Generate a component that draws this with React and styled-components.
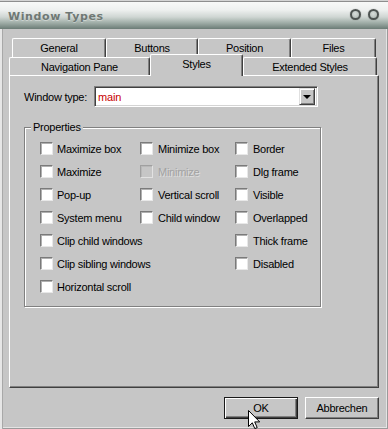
import React from "react";
import styled, { createGlobalStyle, css } from "styled-components";

const GlobalStyle = createGlobalStyle`
  html, body { margin: 0; padding: 0; background: #c6c6c6; }
  body { font-family: "Liberation Sans", Arial, sans-serif; }
`;

const Window = styled.div`
  position: relative;
  width: 388px;
  height: 429px;
  display: flex;
  flex-direction: column;
  overflow: hidden;
  background: #c6c6c6;
`;

const TitleBar = styled.div`
  box-sizing: border-box;
  height: 29px;
  flex: none;
  display: flex;
  align-items: center;
  justify-content: space-between;
  padding: 3px 9px 0 8px;
  background: linear-gradient(
    to bottom,
    #d4d4d4 0px,
    #d4d4d4 1px,
    #8e8e8e 1px,
    #8e8e8e 2px,
    #f8f9f8 2px,
    #eef0ef 10px,
    #cfd6d3 17px,
    #9eaca6 23px,
    #6b7c76 29px
  );
`;

const Title = styled.span`
  font-family: "DejaVu Sans", Verdana, sans-serif;
  font-weight: bold;
  font-size: 11px;
  letter-spacing: 0.6px;
  color: #6e7874;
  text-shadow: 0 1px 0 rgba(255, 255, 255, 0.35);
`;

const TitleButtons = styled.div`
  display: flex;
  gap: 7px;
  margin-top: -3px;
`;

const RoundButton = styled.span`
  box-sizing: border-box;
  width: 11px;
  height: 11px;
  border-radius: 50%;
  border: 2.5px solid #4c5250;
  background: radial-gradient(circle at 45% 40%, #d8dedb 0%, #aab3af 100%);
  box-shadow: 0 0 1px rgba(40, 40, 40, 0.6);
`;

const Body = styled.div`
  flex: 1;
  display: flex;
  flex-direction: column;
  padding: 9px 9px 0 9px;
  box-shadow: inset 2px 0 0 #e6e6e6, inset 3px 0 0 #a8a8a8,
    inset -1px -1px 0 #9a9a9a, inset -2px -2px 0 #e4e4e4;
`;

const TabStrip = styled.div`
  display: flex;
  flex-direction: column;
  height: 37px;
  flex: none;
`;

const TabRow = styled.div`
  display: flex;
  height: ${(p) => p.$h}px;
  margin-left: ${(p) => p.$indent}px;
`;

const Tab = styled.div`
  box-sizing: border-box;
  width: ${(p) => p.$w}px;
  display: flex;
  align-items: center;
  justify-content: center;
  font-size: 11px;
  letter-spacing: -0.25px;
  color: #000;
  background: #c6c6c6;
  border-top: 1px solid #fff;
  border-left: 1px solid #fff;
  border-right: 1px solid #404040;
  box-shadow: inset -1px 0 0 #808080;
  border-radius: 2px 2px 0 0;
  position: relative;
  ${(p) =>
    p.$selected &&
    css`
      margin-top: -3px;
      margin-bottom: -1px;
      padding-bottom: 4px;
      z-index: 2;
    `}
`;

const Panel = styled.div`
  position: relative;
  z-index: 1;
  box-sizing: border-box;
  height: 313px;
  flex: none;
  border: 1px solid;
  border-color: #fff #404040 #404040 #fff;
  box-shadow: inset -1px -1px 0 #808080;
  padding: 10px 14px 0 14px;
`;

const FieldRow = styled.div`
  display: flex;
  align-items: center;
  gap: 7px;
`;

const Label = styled.span`
  font-size: 11px;
  letter-spacing: -0.25px;
  color: ${(p) => (p.$disabled ? "#a2a2a2" : "#000")};
  ${(p) => p.$disabled && css`text-shadow: 1px 1px 0 #dedede;`}
  white-space: nowrap;
`;

const Combo = styled.div`
  box-sizing: border-box;
  width: 224px;
  height: 21px;
  display: flex;
  align-items: center;
  justify-content: space-between;
  background: #fff;
  border: 1px solid;
  border-color: #808080 #fff #fff #808080;
  box-shadow: inset 1px 1px 0 #404040, inset -1px -1px 0 #d4d4d4;
  padding: 2px 2px 2px 3px;
`;

const ComboText = styled.span`
  font-size: 11px;
  letter-spacing: -0.2px;
  color: #c80000;
`;

const ComboButton = styled.span`
  box-sizing: border-box;
  width: 16px;
  height: 17px;
  display: flex;
  align-items: center;
  justify-content: center;
  background: #c6c6c6;
  border: 1px solid;
  border-color: #e0e0e0 #404040 #404040 #e0e0e0;
  box-shadow: inset 1px 1px 0 #fff, inset -1px -1px 0 #808080;
`;

const Arrow = styled.span`
  width: 0;
  height: 0;
  border-left: 4px solid transparent;
  border-right: 4px solid transparent;
  border-top: 4px solid #000;
  margin-top: 1px;
`;

const Group = styled.fieldset`
  box-sizing: border-box;
  width: 297px;
  margin: 14px 0 0 0;
  padding: 3px 0 8px 15px;
  min-width: 0;
  border: 1px solid #808080;
  box-shadow: 1px 1px 0 #fff, inset 1px 1px 0 #fff;
`;

const Legend = styled.legend`
  font-size: 11px;
  letter-spacing: -0.25px;
  line-height: 13px;
  padding: 0 2px;
  margin-left: -9px;
  background: #c6c6c6;
  color: #000;
`;

const Columns = styled.div`
  display: flex;
`;

const Column = styled.div`
  display: flex;
  flex-direction: column;
  width: ${(p) => p.$w}px;
`;

const CheckRow = styled.div`
  height: 23px;
  display: flex;
  align-items: center;
  gap: ${(p) => p.$gap}px;
`;

const Box = styled.span`
  box-sizing: border-box;
  width: 13px;
  height: 13px;
  flex: none;
  background: ${(p) => (p.$disabled ? "#c6c6c6" : "#fff")};
  border: 1px solid;
  border-color: ${(p) =>
    p.$disabled ? "#a0a0a0 #e2e2e2 #e2e2e2 #a0a0a0" : "#7a7a7a #e8e8e8 #e8e8e8 #7a7a7a"};
  box-shadow: inset 1px 1px 0 ${(p) => (p.$disabled ? "#b8b8b8" : "#b0b0b0")};
`;

const ButtonRow = styled.div`
  display: flex;
  justify-content: flex-end;
  gap: 7px;
  margin-top: 9px;
`;

const Button = styled.div`
  box-sizing: border-box;
  width: 74px;
  height: 22px;
  display: flex;
  align-items: center;
  justify-content: center;
  font-size: 11px;
  letter-spacing: -0.25px;
  color: #000;
  background: #c6c6c6;
  ${(p) =>
    p.$default
      ? css`
          border: 1px solid #1a1a1a;
          box-shadow: inset 1px 1px 0 #fff, inset -1px -1px 0 #404040,
            inset -2px -2px 0 #808080;
        `
      : css`
          border: 1px solid;
          border-color: #fff #404040 #404040 #fff;
          box-shadow: inset -1px -1px 0 #808080;
        `}
`;

const Cursor = styled.svg`
  position: absolute;
  left: 248px;
  top: 410px;
  z-index: 5;
`;

const col1 = ["Maximize box", "Maximize", "Pop-up", "System menu", "Clip child windows", "Clip sibling windows", "Horizontal scroll"];
const col2 = [
  { t: "Minimize box" },
  { t: "Minimize", d: true },
  { t: "Vertical scroll" },
  { t: "Child window" },
];
const col3 = ["Border", "Dlg frame", "Visible", "Overlapped", "Thick frame", "Disabled"];

function Check({ label, disabled, gap = 5 }) {
  return (
    <CheckRow $gap={gap}>
      <Box $disabled={disabled} />
      <Label $disabled={disabled}>{label}</Label>
    </CheckRow>
  );
}

export default function App() {
  return (
    <>
      <GlobalStyle />
      <Window>
        <TitleBar>
          <Title>Window Types</Title>
          <TitleButtons>
            <RoundButton />
            <RoundButton />
          </TitleButtons>
        </TitleBar>
        <Body>
          <TabStrip>
            <TabRow $h={19} $indent={3}>
              <Tab $w={94}>General</Tab>
              <Tab $w={92}>Buttons</Tab>
              <Tab $w={93}>Position</Tab>
              <Tab $w={85}>Files</Tab>
            </TabRow>
            <TabRow $h={18} $indent={0}>
              <Tab $w={141}>Navigation Pane</Tab>
              <Tab $w={93} $selected>
                Styles
              </Tab>
              <Tab $w={134}>Extended Styles</Tab>
            </TabRow>
          </TabStrip>
          <Panel>
            <FieldRow>
              <Label>Window type:</Label>
              <Combo>
                <ComboText>main</ComboText>
                <ComboButton>
                  <Arrow />
                </ComboButton>
              </Combo>
            </FieldRow>
            <Group>
              <Legend>Properties</Legend>
              <Columns>
                <Column $w={100}>
                  {col1.map((l) => (
                    <Check key={l} label={l} gap={4} />
                  ))}
                </Column>
                <Column $w={95}>
                  {col2.map((c) => (
                    <Check key={c.t} label={c.t} disabled={c.d} />
                  ))}
                </Column>
                <Column $w={80}>
                  {col3.map((l) => (
                    <Check key={l} label={l} />
                  ))}
                </Column>
              </Columns>
            </Group>
          </Panel>
          <ButtonRow>
            <Button $default>OK</Button>
            <Button>Abbrechen</Button>
          </ButtonRow>
        </Body>
        <Cursor width="13" height="20" viewBox="0 0 13 20">
          <path
            d="M0.5 0.5 L0.5 16.5 L4.3 12.8 L6.8 18.6 L9.2 17.6 L6.7 11.9 L11.7 11.9 Z"
            fill="#fff"
            stroke="#000"
            strokeWidth="1"
            strokeLinejoin="miter"
          />
        </Cursor>
      </Window>
    </>
  );
}
